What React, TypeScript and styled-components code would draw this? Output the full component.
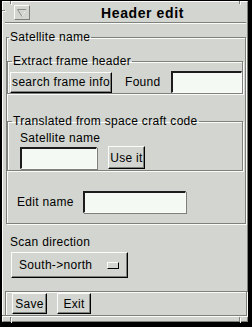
import React from "react";
import styled, { createGlobalStyle } from "styled-components";

const GlobalStyle = createGlobalStyle`
  html, body {
    margin: 0;
    padding: 0;
    background: #000;
  }
  body {
    font-family: "Liberation Sans", Arial, sans-serif;
    font-size: 12px;
    color: #000;
  }
  * {
    box-sizing: border-box;
  }
`;

const palette = {
  bg: "#d3d6d0",
  light: "#fbfcfa",
  shadow: "#7d807b",
  dark: "#000",
  field: "#f4f9f3",
};

const Window = styled.div`
  width: 252px;
  height: 327px;
  background: #000;
  padding: 1px 4px 5px 2px;
`;

const Frame = styled.div`
  position: relative;
  height: 100%;
  background: ${palette.bg};
  border-top: 1px solid ${palette.light};
  border-left: 1px solid ${palette.light};
  border-right: 1px solid ${palette.shadow};
  border-bottom: 1px solid ${palette.shadow};
  padding: 0 0 5px 2px;
  display: flex;
  flex-direction: column;
`;

// little resize-handle notches in the window border
const Notch = styled.span<{ $x: number; $y: number; $w: number; $h: number }>`
  position: absolute;
  left: ${(p) => p.$x}px;
  top: ${(p) => p.$y}px;
  width: ${(p) => p.$w}px;
  height: ${(p) => p.$h}px;
  background: ${palette.shadow};
  box-shadow: 1px 1px 0 ${palette.light};
`;

const TitleBar = styled.div`
  height: 20px;
  display: flex;
  align-items: flex-start;
  padding: 3px 0 0 9px;
`;

const MenuButton = styled.div`
  width: 16px;
  height: 15px;
  border-top: 1px solid ${palette.light};
  border-left: 1px solid ${palette.light};
  border-right: 1px solid ${palette.shadow};
  border-bottom: 1px solid ${palette.shadow};
  display: flex;
  align-items: center;
  justify-content: center;
`;

const Title = styled.div`
  flex: 1;
  text-align: center;
  font-weight: bold;
  font-size: 14px;
  line-height: 14px;
  letter-spacing: 0.6px;
  padding: 1px 0 0 8px;
`;

const Separator = styled.div`
  height: 2px;
  margin-right: 1px;
  border-top: 1px solid ${palette.shadow};
  border-bottom: 1px solid ${palette.light};
`;

const Client = styled.div`
  flex: 1;
  display: flex;
  flex-direction: column;
  padding: 6px 1px 0 1px;
`;

const Group = styled.fieldset<{ $inner?: boolean; $gap?: number }>`
  margin: ${(p) => p.$gap ?? 0}px ${(p) => (p.$inner ? 2 : 0)}px 0 0;
  padding: ${(p) => (p.$inner ? "0 0 0 2px" : "10px 0 10px 0")};
  border: 1px solid ${palette.shadow};
  box-shadow: inset 1px 1px 0 ${palette.light}, 1px 1px 0 ${palette.light};
  min-width: 0;
`;

const Legend = styled.legend`
  font-size: 12px;
  line-height: 14px;
  padding: 0 1px;
  margin-left: 2px;
  letter-spacing: 0.3px;
`;

const Row = styled.div<{ $pad?: number; $top?: number; $bottomAlign?: boolean }>`
  display: flex;
  align-items: ${(p) => (p.$bottomAlign ? "flex-end" : "center")};
  padding-left: ${(p) => p.$pad ?? 0}px;
  margin-top: ${(p) => p.$top ?? 0}px;
`;

const Label = styled.span<{ $left?: number; $right?: number }>`
  line-height: 14px;
  letter-spacing: 0.3px;
  margin-left: ${(p) => p.$left ?? 0}px;
  margin-right: ${(p) => p.$right ?? 0}px;
  white-space: nowrap;
`;

const Button = styled.button<{ $w: number; $h?: number; $left?: number }>`
  width: ${(p) => p.$w}px;
  height: ${(p) => p.$h ?? 21}px;
  margin-left: ${(p) => p.$left ?? 0}px;
  background: ${palette.bg};
  font-family: inherit;
  font-size: 12px;
  letter-spacing: 0.3px;
  color: #000;
  padding: 0;
  border-top: 1px solid ${palette.light};
  border-left: 1px solid ${palette.light};
  border-right: 1px solid ${palette.dark};
  border-bottom: 1px solid ${palette.dark};
  box-shadow: inset -1px -1px 0 ${palette.shadow};
  flex-shrink: 0;
`;

const Field = styled.input<{ $w?: number }>`
  width: ${(p) => (p.$w ? `${p.$w}px` : "auto")};
  flex: ${(p) => (p.$w ? "0 0 auto" : "1")};
  min-width: 0;
  height: 22px;
  background: ${palette.field};
  border-top: 2px solid #1c1c1c;
  border-left: 2px solid #1c1c1c;
  border-right: 1px solid ${palette.light};
  border-bottom: 1px solid ${palette.light};
  box-shadow: 1px 1px 0 ${palette.shadow};
  padding: 0 3px;
  font-family: inherit;
  font-size: 12px;
  outline: none;
`;

const Block = styled.div<{ $pad?: number; $top?: number; $bottom?: number }>`
  padding: ${(p) => p.$top ?? 0}px 0 ${(p) => p.$bottom ?? 0}px ${(p) => p.$pad ?? 0}px;
`;

const OptionMenu = styled.div`
  width: 117px;
  height: 26px;
  margin: 3px 0 0 5px;
  border-top: 1px solid ${palette.light};
  border-left: 1px solid ${palette.light};
  border-right: 1px solid ${palette.dark};
  border-bottom: 1px solid ${palette.dark};
  box-shadow: inset -1px -1px 0 ${palette.shadow};
  display: flex;
  align-items: center;
  padding: 0 8px 0 7px;
  justify-content: space-between;
`;

const Indicator = styled.span`
  width: 12px;
  height: 7px;
  border-top: 1px solid ${palette.light};
  border-left: 1px solid ${palette.light};
  border-right: 1px solid ${palette.dark};
  border-bottom: 1px solid ${palette.dark};
`;

const ButtonBar = styled.div`
  margin-top: auto;
  margin-right: -1px;
  margin-left: -1px;
  height: 25px;
  border: 1px solid ${palette.shadow};
  box-shadow: inset 1px 1px 0 ${palette.light}, 1px 1px 0 ${palette.light};
  display: flex;
  align-items: flex-start;
  padding: 1px 0 0 6px;
  gap: 10px;
`;

const App: React.FC = () => {
  return (
    <>
      <GlobalStyle />
      <Window>
        <Frame>
          <Notch $x={7} $y={-1} $w={1} $h={3} />
          <Notch $x={-1} $y={8} $w={3} $h={1} />
          <Notch $x={236} $y={-1} $w={1} $h={3} />
          <Notch $x={7} $y={315} $w={1} $h={5} />
          <Notch $x={-1} $y={313} $w={3} $h={1} />
          <Notch $x={236} $y={315} $w={1} $h={5} />
          <TitleBar>
            <MenuButton>
              <svg width="10" height="8" viewBox="0 0 10 8">
                <path d="M0.5 0.5 H9.5 L5 7.5 Z" fill="none" stroke="#8a8d88" strokeWidth="1" />
                <path d="M5 7.5 L9.5 0.5" stroke="#fbfcfa" strokeWidth="1" />
              </svg>
            </MenuButton>
            <Title>Header edit</Title>
          </TitleBar>
          <Separator />
          <Client>
            <Group>
              <Legend>Satellite name</Legend>
              <Group $inner>
                <Legend>Extract frame header</Legend>
                <Row $top={3}>
                  <Button $w={102}>search frame info</Button>
                  <Label $left={13} $right={10}>Found</Label>
                  <Field />
                </Row>
              </Group>
              <Group $inner $gap={20}>
                <Legend>Translated from space craft code</Legend>
                <Block $pad={10} $top={3} $bottom={1}>
                  <Label>Satellite name</Label>
                  <Row $top={1} $bottomAlign>
                    <Field $w={77} />
                    <Button $w={37} $h={23} $left={11}>Use it</Button>
                  </Row>
                </Block>
              </Group>
              <Row $pad={10} $top={20}>
                <Label $right={9}>Edit name</Label>
                <Field $w={103} />
              </Row>
            </Group>
            <Block $pad={4} $top={11}>
              <Label>Scan direction</Label>
            </Block>
            <OptionMenu>
              <Label>South‑&gt;north</Label>
              <Indicator />
            </OptionMenu>
            <ButtonBar>
              <Button $w={35}>Save</Button>
              <Button $w={34}>Exit</Button>
            </ButtonBar>
          </Client>
        </Frame>
      </Window>
    </>
  );
};

export default App;
